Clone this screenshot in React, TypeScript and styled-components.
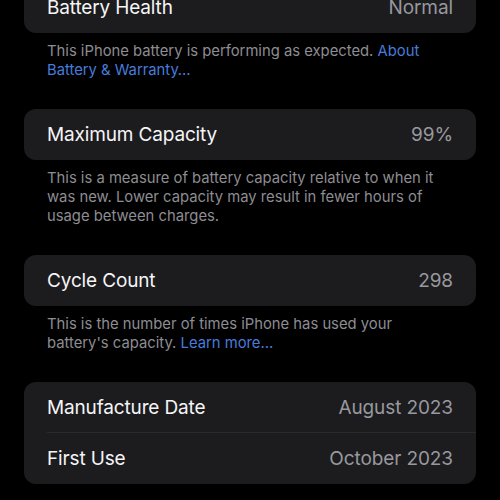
import React from 'react'
import styled, { createGlobalStyle } from 'styled-components'

const GlobalStyle = createGlobalStyle`
  html, body {
    margin: 0;
    padding: 0;
    background: #000;
  }
  body {
    font-family: Inter, "Noto Sans", "Liberation Sans", sans-serif;
    -webkit-font-smoothing: antialiased;
  }
`

const Page = styled.div`
  width: 500px;
  height: 500px;
  overflow: hidden;
  background: #000;
`

const Content = styled.div`
  display: flex;
  flex-direction: column;
  margin-top: -18px;
  padding: 0 24px;
`

const Section = styled.section`
  display: flex;
  flex-direction: column;
  padding-bottom: 29px;
`

const Card = styled.div`
  display: flex;
  flex-direction: column;
  background: #1c1c1e;
  border-radius: 12px;
  overflow: hidden;
`

const Row = styled.div<{ $divider?: boolean }>`
  position: relative;
  display: flex;
  align-items: center;
  justify-content: space-between;
  height: 51px;
  padding: 0 23px;

  &::after {
    content: '';
    display: ${(p) => (p.$divider ? 'block' : 'none')};
    position: absolute;
    left: 23px;
    right: 0;
    bottom: 0;
    height: 1px;
    background: #2a2a2d;
  }
`

const Label = styled.span`
  color: #f5f5f7;
  font-size: 19px;
  letter-spacing: -0.15px;
`

const Value = styled.span`
  color: #98989e;
  font-size: 19px;
  letter-spacing: -0.1px;
`

const Footer = styled.p`
  margin: 0;
  padding: 9px 23px 0;
  color: #8d8d92;
  font-size: 14.8px;
  line-height: 19px;
`

const Link = styled.a`
  color: #477cdc;
  text-decoration: none;
`

export default function App() {
  return (
    <Page>
      <GlobalStyle />
      <Content>
        <Section>
          <Card>
            <Row>
              <Label>Battery Health</Label>
              <Value>Normal</Value>
            </Row>
          </Card>
          <Footer>
            This iPhone battery is performing as expected. <Link>About Battery &amp; Warranty…</Link>
          </Footer>
        </Section>

        <Section>
          <Card>
            <Row>
              <Label>Maximum Capacity</Label>
              <Value>99%</Value>
            </Row>
          </Card>
          <Footer>
            This is a measure of battery capacity relative to when it was new. Lower capacity may result in fewer
            hours of usage between charges.
          </Footer>
        </Section>

        <Section>
          <Card>
            <Row>
              <Label>Cycle Count</Label>
              <Value>298</Value>
            </Row>
          </Card>
          <Footer>
            This is the number of times iPhone has used your battery's capacity. <Link>Learn more…</Link>
          </Footer>
        </Section>

        <Section>
          <Card>
            <Row $divider>
              <Label>Manufacture Date</Label>
              <Value>August 2023</Value>
            </Row>
            <Row>
              <Label>First Use</Label>
              <Value>October 2023</Value>
            </Row>
          </Card>
        </Section>
      </Content>
    </Page>
  )
}
